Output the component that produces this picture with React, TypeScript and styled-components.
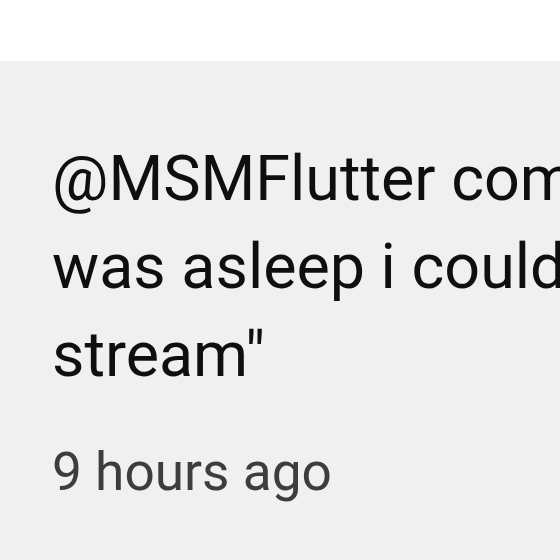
import React from "react";
import styled, { createGlobalStyle } from "styled-components";

const Global = createGlobalStyle`
  html, body {
    margin: 0;
    padding: 0;
    background: #ffffff;
    width: 560px;
    height: 560px;
    overflow: hidden;
  }
  body {
    font-family: Roboto, "Liberation Sans", Arial, sans-serif;
  }
`;

const Page = styled.div`
  width: 560px;
  height: 560px;
  display: flex;
  flex-direction: column;
  overflow: hidden;
`;

const TopSpace = styled.div`
  height: 61px;
  flex: none;
  background: #ffffff;
`;

const Card = styled.div`
  flex: 1;
  background: #f0f0f0;
  padding: 74px 0 0 52px;
  overflow: hidden;
  display: flex;
  flex-direction: column;
  gap: 34px;
`;

const Body = styled.div`
  font-family: Roboto, "Liberation Sans", Arial, sans-serif;
  font-size: 62.8px;
  line-height: 88px;
  color: #0f0f0f;
`;

const Line = styled.div`
  white-space: nowrap;
`;

const Time = styled.div`
  font-family: Roboto, "Liberation Sans", Arial, sans-serif;
  font-size: 53.2px;
  line-height: 79px;
  color: #3d3d3d;
  white-space: nowrap;
`;

export default function App() {
  return (
    <>
      <Global />
      <Page>
        <TopSpace />
        <Card>
          <Body>
            <Line>@MSMFlutter commented "while i</Line>
            <Line>was asleep i couldn't watch the</Line>
            <Line>stream"</Line>
          </Body>
          <Time>9 hours ago</Time>
        </Card>
      </Page>
    </>
  );
}
